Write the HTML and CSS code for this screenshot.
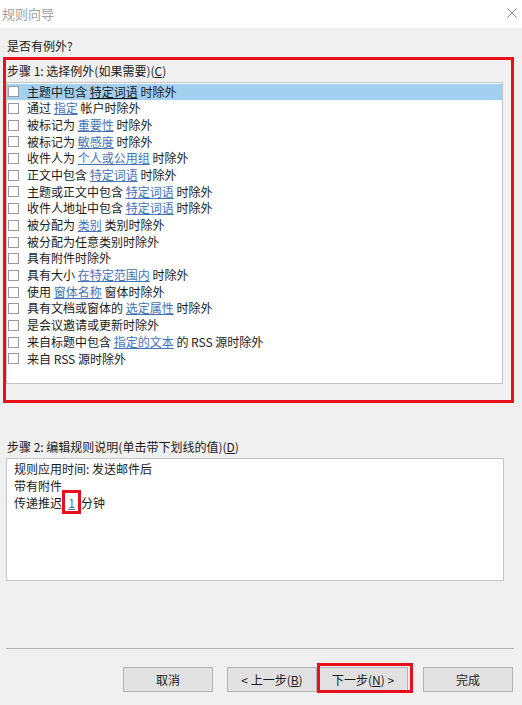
FILE: index.html
```html
<!DOCTYPE html>
<html lang="zh-CN">
<head>
<meta charset="utf-8">
<title>规则向导</title>
<link rel="stylesheet" href="styles.css">
</head>
<body>
<div class="titlebar">
  <span class="title">规则向导</span>
  <svg class="close" width="10" height="10" viewBox="0 0 10 10"><path d="M0.5 0.5 L9.5 9.5 M9.5 0.5 L0.5 9.5" stroke="#8a8a8a" stroke-width="1" fill="none"/></svg>
</div>
<div class="main">
  <div class="question">是否有例外?</div>
  <div class="group">
    <div class="glabel">步骤 1: 选择例外(如果需要)(<u>C</u>)</div>
    <div class="list">
      <div class="row sel"><span class="cb"></span><span>主题中包含 <a>特定词语</a> 时除外</span></div>
      <div class="row"><span class="cb"></span><span>通过 <a>指定</a> 帐户时除外</span></div>
      <div class="row"><span class="cb"></span><span>被标记为 <a>重要性</a> 时除外</span></div>
      <div class="row"><span class="cb"></span><span>被标记为 <a>敏感度</a> 时除外</span></div>
      <div class="row"><span class="cb"></span><span>收件人为 <a>个人或公用组</a> 时除外</span></div>
      <div class="row"><span class="cb"></span><span>正文中包含 <a>特定词语</a> 时除外</span></div>
      <div class="row"><span class="cb"></span><span>主题或正文中包含 <a>特定词语</a> 时除外</span></div>
      <div class="row"><span class="cb"></span><span>收件人地址中包含 <a>特定词语</a> 时除外</span></div>
      <div class="row"><span class="cb"></span><span>被分配为 <a>类别</a> 类别时除外</span></div>
      <div class="row"><span class="cb"></span><span>被分配为任意类别时除外</span></div>
      <div class="row"><span class="cb"></span><span>具有附件时除外</span></div>
      <div class="row"><span class="cb"></span><span>具有大小 <a>在特定范围内</a> 时除外</span></div>
      <div class="row"><span class="cb"></span><span>使用 <a>窗体名称</a> 窗体时除外</span></div>
      <div class="row"><span class="cb"></span><span>具有文档或窗体的 <a>选定属性</a> 时除外</span></div>
      <div class="row"><span class="cb"></span><span>是会议邀请或更新时除外</span></div>
      <div class="row"><span class="cb"></span><span>来自标题中包含 <a>指定的文本</a> 的 RSS 源时除外</span></div>
      <div class="row"><span class="cb"></span><span>来自 RSS 源时除外</span></div>
    </div>
    <div class="mark mark-group"></div>
  </div>
  <div class="glabel step2">步骤 2: 编辑规则说明(单击带下划线的值)(<u>D</u>)</div>
  <div class="desc">
    <div class="dline">规则应用时间: 发送邮件后</div>
    <div class="dline">带有附件</div>
    <div class="dline">传递推迟<span class="val"><a>1</a><span class="mark mark-val"></span></span>分钟</div>
  </div>
  <div class="sep"></div>
  <div class="buttons">
    <button class="btn cancel">取消</button>
    <button class="btn back">&lt; 上一步(<u>B</u>)</button>
    <button class="btn next">下一步(<u>N</u>) &gt;<span class="mark mark-next"></span></button>
    <button class="btn finish">完成</button>
  </div>
</div>
</body>
</html>
```

FILE: styles.css
```css
html, body {
  margin: 0;
  padding: 0;
}
body {
  width: 522px;
  height: 705px;
  background: #f0f0f0;
  font-family: "Noto Sans CJK SC", "Noto Sans", sans-serif;
  font-size: 12px;
  color: #1a1a1a;
  overflow: hidden;
}
.titlebar {
  height: 28px;
  background: #ffffff;
  display: flex;
  align-items: center;
  justify-content: space-between;
  padding: 0 5px 0 2px;
  box-sizing: border-box;
}
.title {
  font-size: 13px;
  color: #a0a0a0;
  line-height: 26px;
  margin-top: -1px;
}
.close {
  display: block;
  margin-top: -3px;
  margin-right: 0;
}
.main {
  padding: 8px 0 0 6px;
  display: flex;
  flex-direction: column;
}
.question {
  height: 20px;
  line-height: 20px;
  padding-left: 1px;
}
.group {
  position: relative;
  margin-top: 4px;
  width: 497px;
}
.glabel {
  height: 22px;
  line-height: 21px;
  padding-left: 1px;
}
.glabel u {
  text-decoration: underline;
}
.list {
  height: 302px;
  box-sizing: border-box;
  background: #ffffff;
  border: 1px solid #c4c4c4;
  padding-top: 0.5px;
}
.row {
  height: 16.7px;
  line-height: 16.7px;
  display: flex;
  align-items: center;
  white-space: nowrap;
}
.row.sel {
  background: #a4d0f0;
}
.cb {
  width: 11px;
  height: 11px;
  box-sizing: border-box;
  border: 1px solid #9a9a9a;
  background: #ffffff;
  margin-left: 1px;
  margin-right: 8px;
  flex: none;
}
a {
  color: #4472b6;
  text-decoration: underline;
}
.row.sel a {
  color: #1a1a1a;
}
.mark {
  position: absolute;
  border: 3px solid #e8101c;
  pointer-events: none;
}
.mark-group {
  top: -3px;
  left: -3px;
  right: -11px;
  bottom: -19px;
}
.step2 {
  margin-top: 52px;
}
.desc {
  width: 498px;
  height: 123px;
  box-sizing: border-box;
  background: #ffffff;
  border: 1px solid #c4c4c4;
  padding: 1px 0 0 7px;
}
.dline {
  height: 17px;
  line-height: 17px;
  white-space: nowrap;
}
.val {
  position: relative;
  display: inline-block;
  width: 19px;
  text-align: center;
}
.mark-val {
  left: 0;
  right: 0;
  top: -4px;
  bottom: -3px;
}
.sep {
  width: 508px;
  height: 1px;
  background: #b4b4b4;
  margin-top: 67px;
}
.buttons {
  display: flex;
  margin-top: 18px;
  padding-left: 117px;
}
.btn {
  position: relative;
  width: 90px;
  height: 25px;
  box-sizing: border-box;
  background: #e1e1e1;
  border: 1px solid #b4b4b4;
  font-family: "Noto Sans CJK SC", "Noto Sans", sans-serif;
  font-size: 12px;
  color: #1a1a1a;
  padding: 0;
  line-height: 22px;
}
.back {
  margin-left: 14px;
}
.next {
  margin-left: 1px;
}
.finish {
  margin-left: 15px;
}
.mark-next {
  left: -2px;
  right: -6px;
  top: -5px;
  bottom: -2px;
}
```
